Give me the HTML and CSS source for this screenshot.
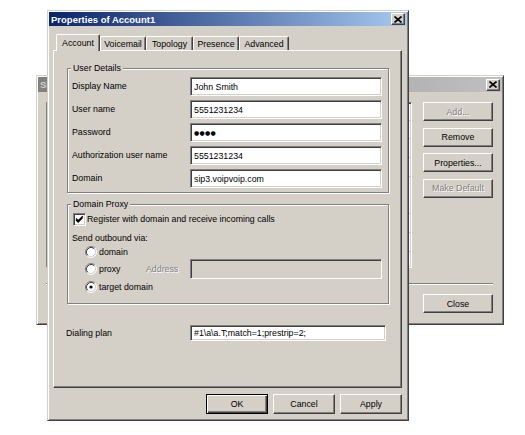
FILE: index.html
```html
<!DOCTYPE html>
<html>
<head>
<meta charset="utf-8">
<link rel="stylesheet" href="styles.css">
</head>
<body>
<div class="win win-back">
  <div class="titlebar inactive">
    <span class="title">SIP Accounts</span>
    <span class="tclose"><svg width="8" height="7" viewBox="0 0 8 7"><path d="M0.5 0.5L7.5 6.5M7.5 0.5L0.5 6.5" stroke="#000" stroke-width="1.6"/></svg></span>
  </div>
  <div class="back-body">
    <div class="back-top">
      <div class="list"></div>
      <div class="btn-col">
        <div class="btn bbtn disabled">Add...</div>
        <div class="btn bbtn">Remove</div>
        <div class="btn bbtn">Properties...</div>
        <div class="btn bbtn disabled">Make Default</div>
      </div>
    </div>
    <div class="sep"></div>
    <div class="back-bottom"><div class="btn bbtn">Close</div></div>
  </div>
</div>

<div class="win win-main">
  <div class="titlebar">
    <span class="title">Properties of Account1</span>
    <span class="tclose"><svg width="8" height="7" viewBox="0 0 8 7"><path d="M0.5 0.5L7.5 6.5M7.5 0.5L0.5 6.5" stroke="#000" stroke-width="1.6"/></svg></span>
  </div>
  <div class="main-body">
    <div class="tabs">
      <div class="tab sel t-account">Account</div>
      <div class="tab t-voicemail">Voicemail</div>
      <div class="tab t-topology">Topology</div>
      <div class="tab t-presence">Presence</div>
      <div class="tab t-advanced">Advanced</div>
    </div>
    <div class="panel">
      <fieldset class="group">
        <legend>User Details</legend>
        <div class="grid">
          <div class="lbl">Display Name</div><div class="field">John Smith</div>
          <div class="lbl">User name</div><div class="field">5551231234</div>
          <div class="lbl">Password</div><div class="field"><span class="dots">●●●●</span></div>
          <div class="lbl">Authorization user name</div><div class="field">5551231234</div>
          <div class="lbl">Domain</div><div class="field">sip3.voipvoip.com</div>
        </div>
      </fieldset>
      <fieldset class="group group2">
        <legend>Domain Proxy</legend>
        <div class="proxy">
          <div class="chk-row">
            <span class="chk"><svg width="11" height="11" viewBox="0 0 11 11"><path d="M2 4.5L4.2 6.8L8.8 2.2M2 5.7L4.2 8L8.8 3.4" stroke="#000" stroke-width="1.3" fill="none"/></svg></span>
            <span>Register with domain and receive incoming calls</span>
          </div>
          <div class="send-row">Send outbound via:</div>
          <div class="radio-row">
            <span class="radio"><svg width="12" height="12" viewBox="0 0 12 12"><circle cx="6" cy="6" r="5" fill="#fff"/><path d="M2.11 9.89A5.5 5.5 0 0 1 9.89 2.11" stroke="#808080" fill="none"/><path d="M2.82 9.18A4.5 4.5 0 0 1 9.18 2.82" stroke="#404040" fill="none"/><path d="M9.89 2.11A5.5 5.5 0 0 1 2.11 9.89" stroke="#fff" fill="none"/><path d="M9.18 2.82A4.5 4.5 0 0 1 2.82 9.18" stroke="#d4d0c8" fill="none"/></svg></span>
            <span>domain</span>
          </div>
          <div class="radio-row proxy-row">
            <div class="proxy-left">
              <span class="radio"><svg width="12" height="12" viewBox="0 0 12 12"><circle cx="6" cy="6" r="5" fill="#fff"/><path d="M2.11 9.89A5.5 5.5 0 0 1 9.89 2.11" stroke="#808080" fill="none"/><path d="M2.82 9.18A4.5 4.5 0 0 1 9.18 2.82" stroke="#404040" fill="none"/><path d="M9.89 2.11A5.5 5.5 0 0 1 2.11 9.89" stroke="#fff" fill="none"/><path d="M9.18 2.82A4.5 4.5 0 0 1 2.82 9.18" stroke="#d4d0c8" fill="none"/></svg></span>
              <span>proxy</span>
            </div>
            <span class="addr disabled">Address</span>
            <div class="field field-dis"></div>
          </div>
          <div class="radio-row target-row">
            <span class="radio"><svg width="12" height="12" viewBox="0 0 12 12"><circle cx="6" cy="6" r="5" fill="#fff"/><path d="M2.11 9.89A5.5 5.5 0 0 1 9.89 2.11" stroke="#808080" fill="none"/><path d="M2.82 9.18A4.5 4.5 0 0 1 9.18 2.82" stroke="#404040" fill="none"/><path d="M9.89 2.11A5.5 5.5 0 0 1 2.11 9.89" stroke="#fff" fill="none"/><path d="M9.18 2.82A4.5 4.5 0 0 1 2.82 9.18" stroke="#d4d0c8" fill="none"/><circle cx="6" cy="6" r="1.6" fill="#000"/></svg></span>
            <span>target domain</span>
          </div>
        </div>
      </fieldset>
      <div class="dial-row">
        <div class="dial-lbl">Dialing plan</div>
        <div class="field field-dial">#1\a\a.T;match=1;prestrip=2;</div>
      </div>
    </div>
    <div class="dlg-buttons">
      <div class="btn dbtn default">OK</div>
      <div class="btn dbtn">Cancel</div>
      <div class="btn dbtn">Apply</div>
    </div>
  </div>
</div>
</body>
</html>
```

FILE: styles.css
```css
html, body {
  margin: 0;
  padding: 0;
  background: #fff;
}
body {
  width: 525px;
  height: 435px;
  position: relative;
  overflow: hidden;
  font-family: "Liberation Sans", Arial, sans-serif;
  font-size: 8.8px;
  color: #000;
}
.win {
  position: absolute;
  box-sizing: border-box;
  background: #d4d0c8;
  border: 1px solid;
  border-color: #d4d0c8 #404040 #404040 #d4d0c8;
  box-shadow: inset 1px 1px 0 #fff, inset -1px -1px 0 #808080;
  padding: 1px;
  display: flex;
  flex-direction: column;
}
.win-back {
  left: 36px;
  top: 75px;
  width: 468px;
  height: 250px;
}
.win-main {
  left: 47px;
  top: 10px;
  width: 362px;
  height: 411px;
}
.titlebar {
  height: 14px;
  flex: none;
  display: flex;
  align-items: center;
  justify-content: space-between;
  padding-left: 2px;
  background: linear-gradient(to right, #0a246a, #a6caf0);
}
.titlebar.inactive {
  height: 15px;
  background: linear-gradient(to right, #808080, #c0c0c0);
}
.title {
  font-weight: bold;
  font-size: 9.5px;
  color: #fff;
  white-space: nowrap;
}
.inactive .title {
  color: #d4d0c8;
}
.tclose {
  box-sizing: border-box;
  width: 14px;
  height: 12px;
  margin-right: 2px;
  background: #d4d0c8;
  border: 1px solid;
  border-color: #fff #404040 #404040 #fff;
  box-shadow: inset -1px -1px 0 #808080;
  display: flex;
  align-items: center;
  justify-content: center;
}
.tclose svg { display: block; }

.btn {
  box-sizing: border-box;
  background: #d4d0c8;
  border: 1px solid;
  border-color: #fff #404040 #404040 #fff;
  box-shadow: inset -1px -1px 0 #808080;
  display: flex;
  align-items: center;
  justify-content: center;
  white-space: nowrap;
}
.btn.default {
  border-color: #000;
  box-shadow: inset 1px 1px 0 #fff, inset -1px -1px 0 #404040, inset -2px -2px 0 #808080;
}
.disabled {
  color: #808080;
  text-shadow: 1px 1px 0 #fff;
}

/* back window */
.back-body {
  flex: 1;
  display: flex;
  flex-direction: column;
  padding: 10px 9px 0 8px;
}
.back-top {
  display: flex;
  height: 166px;
}
.list {
  flex: 1;
  box-sizing: border-box;
  border: 1px solid;
  border-color: #808080 #fff #fff #808080;
  box-shadow: inset 1px 1px 0 #404040, inset -1px -1px 0 #d4d0c8;
  background: #fff repeating-linear-gradient(to bottom, transparent 0, transparent 16.7px, #c8c8c8 16.7px, #c8c8c8 17.7px, transparent 17.7px, transparent 18.7px);
}
.btn-col {
  width: 70px;
  margin-left: 11px;
  display: flex;
  flex-direction: column;
  gap: 6.5px;
}
.bbtn {
  height: 19px;
  width: 70px;
}
.sep {
  margin-top: 15px;
  height: 0;
  border-top: 1px solid #808080;
  border-bottom: 1px solid #fff;
}
.back-bottom {
  margin-top: 9px;
  display: flex;
  justify-content: flex-end;
}

/* main window */
.main-body {
  flex: 1;
  display: flex;
  flex-direction: column;
  padding: 0 5px 0 4px;
}
.tabs {
  margin-top: 8px;
  height: 16px;
  display: flex;
  align-items: flex-end;
  padding-left: 3px;
}
.tab {
  box-sizing: border-box;
  height: 14px;
  border: 1px solid;
  border-bottom: none;
  border-color: #fff #404040 #fff #fff;
  box-shadow: inset -1px 0 0 #808080;
  border-radius: 2px 2px 0 0;
  display: flex;
  align-items: center;
  justify-content: center;
  white-space: nowrap;
  background: #d4d0c8;
}
.tab.sel {
  height: 17px;
  margin-bottom: -1px;
  position: relative;
  z-index: 1;
}
.t-account { width: 44px; }
.t-voicemail { width: 46px; }
.t-topology { width: 47px; }
.t-presence { width: 46px; }
.t-advanced { width: 50px; }

.panel {
  box-sizing: border-box;
  height: 338px;
  border: 1px solid;
  border-color: #fff #404040 #404040 #fff;
  box-shadow: inset -1px -1px 0 #808080;
  padding: 11px 12px 0 13px;
}
.group {
  margin: 0;
  padding: 0;
  min-width: 0;
  border: 1px solid #808080;
  box-shadow: 1px 1px 0 #fff, inset 1px 1px 0 #fff;
}
.group legend {
  padding: 0 2px;
  margin-left: 3px;
  line-height: 12px;
  background: #d4d0c8;
}
.group2 {
  margin-top: 5px;
}
.grid {
  display: grid;
  grid-template-columns: 118px 192px;
  grid-auto-rows: 19px;
  row-gap: 4px;
  padding: 3px 0 4px 4px;
  align-items: center;
}
.lbl {
  padding-bottom: 2px;
  white-space: nowrap;
}
.field {
  box-sizing: border-box;
  height: 19px;
  background: #fff;
  border: 1px solid;
  border-color: #808080 #fff #fff #808080;
  box-shadow: inset 1px 1px 0 #404040, inset -1px -1px 0 #d4d0c8;
  padding-left: 3px;
  display: flex;
  align-items: center;
  white-space: nowrap;
}
.dots {
  font-family: "DejaVu Sans", sans-serif;
  font-size: 6px;
  letter-spacing: 0.3px;
}
.proxy {
  padding: 2px 0 9px 4px;
  display: flex;
  flex-direction: column;
}
.chk-row {
  height: 14px;
  display: flex;
  align-items: center;
  gap: 1px;
}
.chk {
  box-sizing: border-box;
  width: 13px;
  height: 13px;
  margin-left: 1px;
  background: #fff;
  border: 1px solid;
  border-color: #808080 #fff #fff #808080;
  box-shadow: inset 1px 1px 0 #404040, inset -1px -1px 0 #d4d0c8;
  display: flex;
  align-items: center;
  justify-content: center;
}
.chk svg { display: block; }
.send-row {
  margin-top: 5px;
  height: 14px;
  display: flex;
  align-items: center;
}
.radio-row {
  height: 14px;
  display: flex;
  align-items: center;
}
.radio {
  width: 12px;
  height: 12px;
  margin-left: 13px;
  margin-right: 2px;
}
.radio svg { display: block; }
.proxy-row {
  height: 20px;
}
.proxy-left {
  width: 74px;
  display: flex;
  align-items: center;
}
.addr {
  width: 44px;
}
.field-dis {
  width: 192px;
  height: 20px;
  background: #d4d0c8;
}
.target-row {
  margin-top: 1px;
}
.dial-row {
  margin-top: 21px;
  height: 16px;
  display: flex;
  align-items: center;
}
.dial-lbl {
  width: 124px;
  margin-left: -1px;
}
.field-dial {
  width: 196px;
  height: 16px;
}
.dlg-buttons {
  margin-top: 6px;
  display: flex;
  justify-content: flex-end;
  gap: 5px;
}
.dbtn {
  width: 62px;
  height: 20px;
}
```
